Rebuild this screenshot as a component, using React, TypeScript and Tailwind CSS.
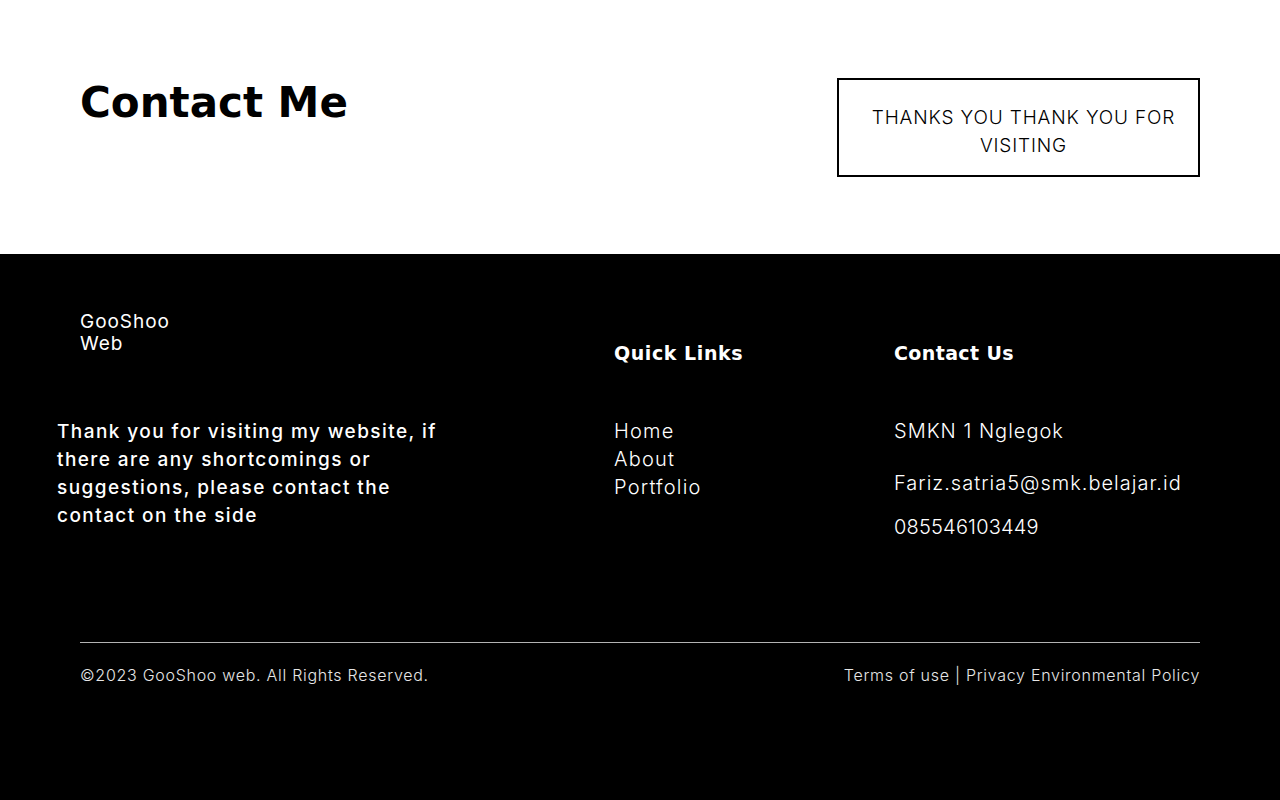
const quickLinks = ['Home', 'About', 'Portfolio'];

export default function App() {
    return (
        <div className="min-h-[800px] bg-black font-['Inter',sans-serif]">
            {/* Contact header */}
            <section className="h-[254px] bg-white px-20 pt-[78px]">
                <div className="flex items-start justify-between">
                    <h1 className="mt-[1px] font-['DejaVu_Sans',sans-serif] text-[42px] font-bold leading-[48px] text-black">
                        Contact Me
                    </h1>
                    <div className="w-[363px] border-2 border-black pb-[15px] pl-[30px] pr-[20px] pt-[24px] text-center text-[19px] font-light leading-[28px] tracking-[0.045em] text-black">
                        THANKS YOU THANK YOU FOR VISITING
                    </div>
                </div>
            </section>

            {/* Footer */}
            <footer className="px-20 pt-[57px] text-white">
                <div className="grid grid-cols-[534px_280px_1fr]">
                    <div className="flex flex-col">
                        <div className="w-[110px] text-[19px] leading-[22px] tracking-[0.05em]">GooShoo Web</div>
                        <p className="-ml-[23px] mt-[63px] w-[400px] text-[19px] font-medium leading-[28px] tracking-[0.075em]">
                            Thank you for visiting my website, if there are any shortcomings or suggestions, please contact the contact on the side
                        </p>
                    </div>

                    <div className="flex flex-col pt-[28px]">
                        <h3 className="font-['DejaVu_Sans',sans-serif] text-[19px] font-bold leading-[28px] tracking-[0.03em]">Quick Links</h3>
                        <nav className="mt-[50px] flex flex-col text-[20px] font-light leading-[28px] tracking-[0.06em]">
                            {quickLinks.map((link) => (
                                <a key={link} href="#">
                                    {link}
                                </a>
                            ))}
                        </nav>
                    </div>

                    <div className="flex flex-col pt-[28px]">
                        <h3 className="font-['DejaVu_Sans',sans-serif] text-[19px] font-bold leading-[28px] tracking-[0.02em]">Contact Us</h3>
                        <div className="mt-[50px] flex flex-col text-[20px] font-light leading-[28px] tracking-[0.05em]">
                            <span>SMKN 1 Nglegok</span>
                            <span className="mt-[24px]">Fariz.satria5@smk.belajar.id</span>
                            <span className="mt-[16px] tracking-[0.01em]">085546103449</span>
                        </div>
                    </div>
                </div>

                <div className="mt-[101px] h-px bg-[#b3b3b3]" />
                <div className="mt-[20px] flex justify-between text-[16px] font-light leading-[24px] tracking-[0.045em] text-[#e6e6e6]">
                    <span>©2023 GooShoo web. All Rights Reserved.</span>
                    <span>Terms of use | Privacy Environmental Policy</span>
                </div>
            </footer>
        </div>
    );
}
